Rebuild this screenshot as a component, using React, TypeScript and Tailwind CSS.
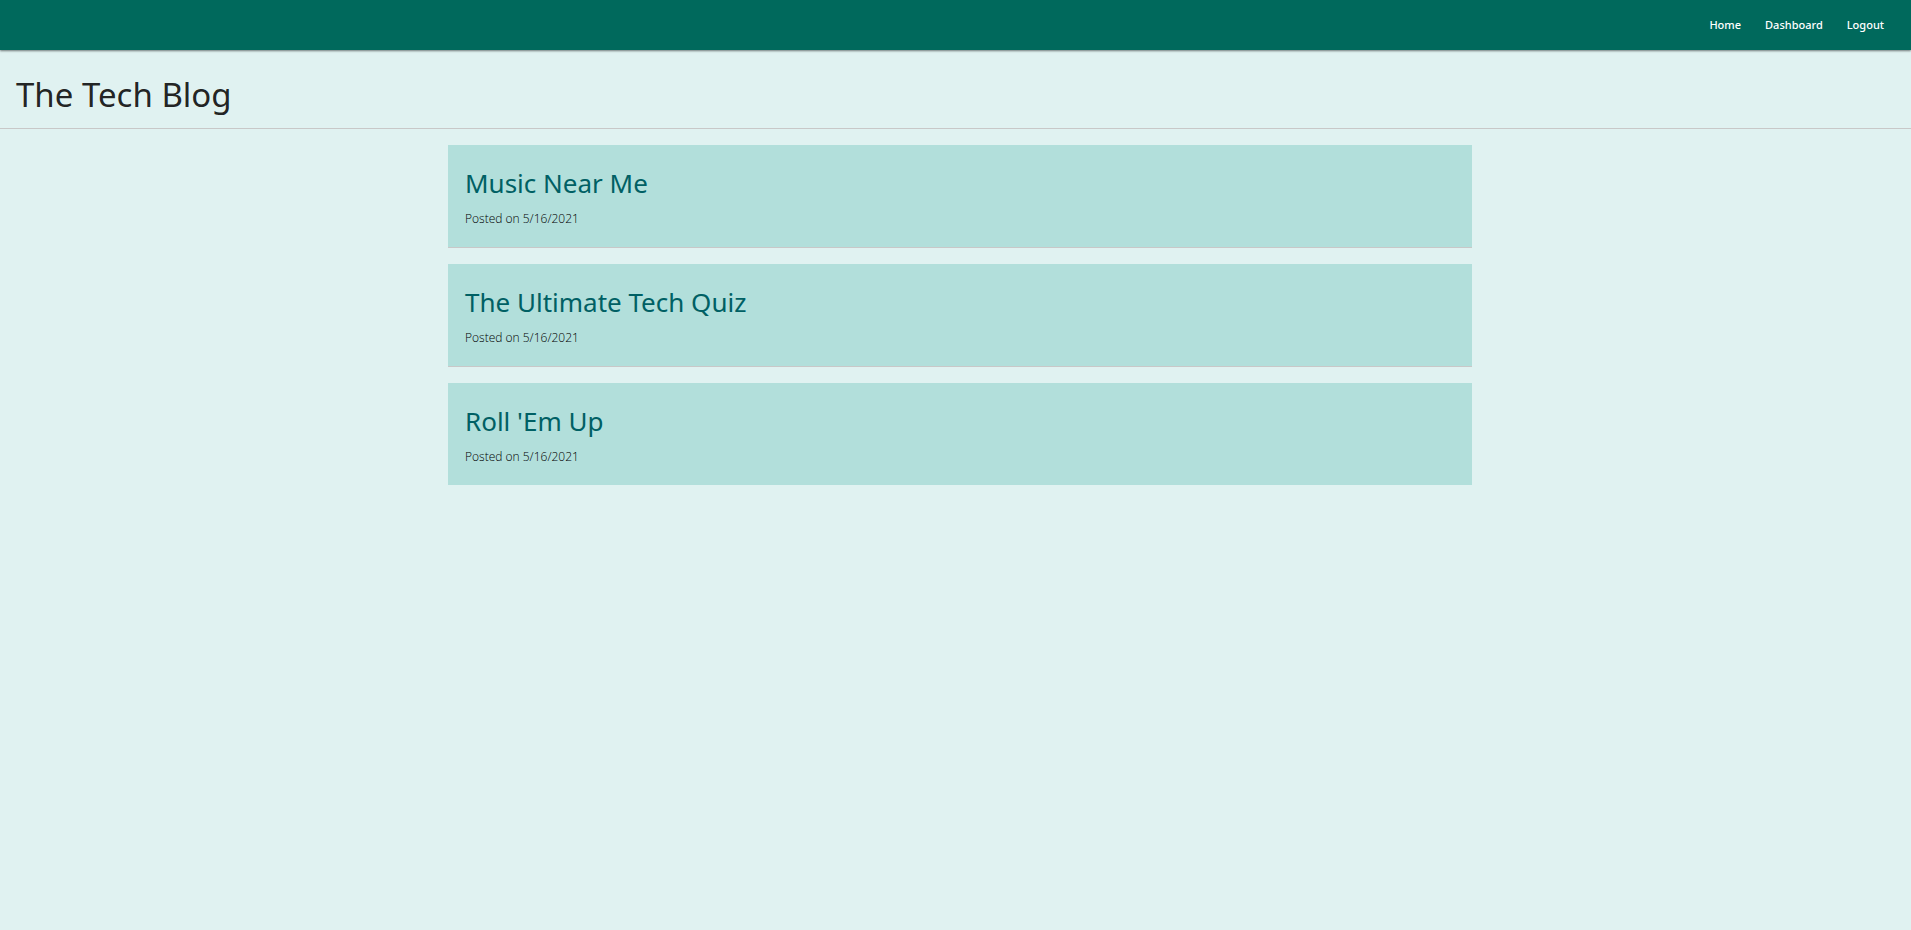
const posts = [
  { title: "Music Near Me", date: "5/16/2021" },
  { title: "The Ultimate Tech Quiz", date: "5/16/2021" },
  { title: "Roll 'Em Up", date: "5/16/2021" },
];

const links = ["Home", "Dashboard", "Logout"];

export default function App() {
  return (
    <div className="min-h-screen bg-[#e0f2f1] font-['Noto_Sans','Open_Sans',sans-serif] text-black/87">
      <nav className="flex h-[50px] items-center justify-end gap-6 bg-[#00695c] px-[27px] text-[11px] font-medium text-white shadow-[0_1px_2px_rgba(0,0,0,0.5)]">
        {links.map((l) => (
          <a key={l} href="#">{l}</a>
        ))}
      </nav>
      <header className="border-b border-[#c8c8c8] px-4 pt-[22px] pb-[10px]">
        <h1 className="text-[33px] leading-[46px]">The Tech Blog</h1>
      </header>
      <div className="pl-[9px]">
        <main className="mx-auto flex max-w-5xl flex-col gap-4 pt-4">
          {posts.map((p) => (
            <article key={p.title} className="border-b border-[#c8c8c8] bg-[#b2dfdb] px-[17px] py-5 last:border-b-0">
              <h2 className="text-[26px] leading-9 text-[#006064]">
                <a href="#">{p.title}</a>
              </h2>
              <p className="mt-[9px] font-['Open_Sans','Noto_Sans',sans-serif] text-xs leading-[17px] font-light text-black">Posted on {p.date}</p>
            </article>
          ))}
        </main>
      </div>
    </div>
  );
}
